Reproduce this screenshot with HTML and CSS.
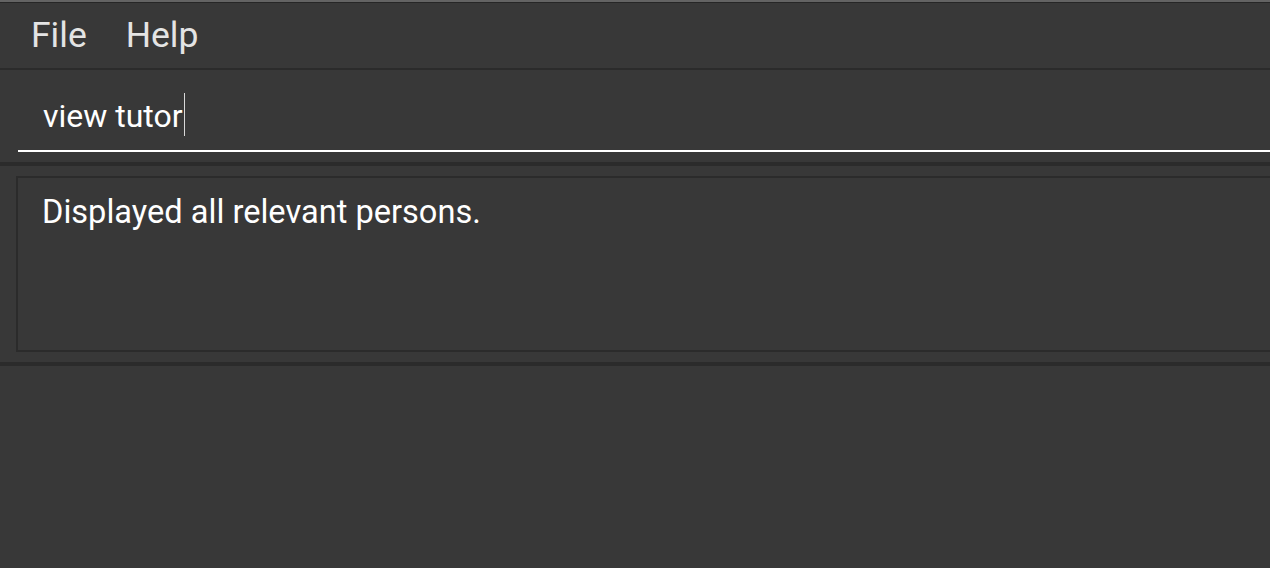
FILE: index.html
```html
<!DOCTYPE html>
<html lang="en">
<head>
<meta charset="utf-8">
<title>Address App</title>
<link rel="stylesheet" href="styles.css">
</head>
<body>
<div class="app">
  <div class="window-edge"></div>
  <nav class="menu-bar">
    <span class="menu-item">File</span>
    <span class="menu-item">Help</span>
  </nav>
  <section class="command-area">
    <div class="command-input"><span class="command-text">view tutor</span><span class="caret"></span></div>
  </section>
  <div class="divider"></div>
  <section class="result-area">
    <div class="result-box">Displayed all relevant persons.</div>
  </section>
  <div class="divider"></div>
  <section class="list-area"></section>
</div>
</body>
</html>
```
FILE: styles.css
```css
html, body {
  margin: 0;
  padding: 0;
  height: 100%;
  background: #383838;
  overflow: hidden;
}

.app {
  display: flex;
  flex-direction: column;
  height: 100%;
  font-family: Roboto, "Liberation Sans", sans-serif;
}

.window-edge {
  height: 2px;
  background: #636363;
  border-bottom: 1px solid #262626;
}

.menu-bar {
  display: flex;
  gap: 39px;
  height: 67px;
  box-sizing: border-box;
  padding: 15px 0 0 31px;
  border-bottom: 2px solid #2b2b2b;
}

.menu-item {
  font-size: 35.5px;
  line-height: 1;
  color: #e4e4e4;
}

.command-area {
  padding: 16px 0 10px 18px;
}

.command-input {
  display: flex;
  align-items: center;
  height: 66px;
  box-sizing: border-box;
  padding: 0 0 0 25px;
  border-bottom: 2px solid #ffffff;
  font-size: 32px;
  color: #ffffff;
}

.command-text {
  line-height: 1;
  margin-top: -4px;
}

.caret {
  width: 1px;
  height: 43px;
  background: #d8d8d8;
  margin-left: 1px;
  margin-top: -8px;
}

.divider {
  height: 4px;
  background: #2b2b2b;
}

.result-area {
  padding: 10px 0 10px 16px;
}

.result-box {
  height: 176px;
  box-sizing: border-box;
  margin-right: -20px;
  border: 2px solid #2b2b2b;
  padding: 18px 0 0 24px;
  font-size: 32.6px;
  line-height: 1;
  color: #ffffff;
}

.list-area {
  flex: 1;
}
```
